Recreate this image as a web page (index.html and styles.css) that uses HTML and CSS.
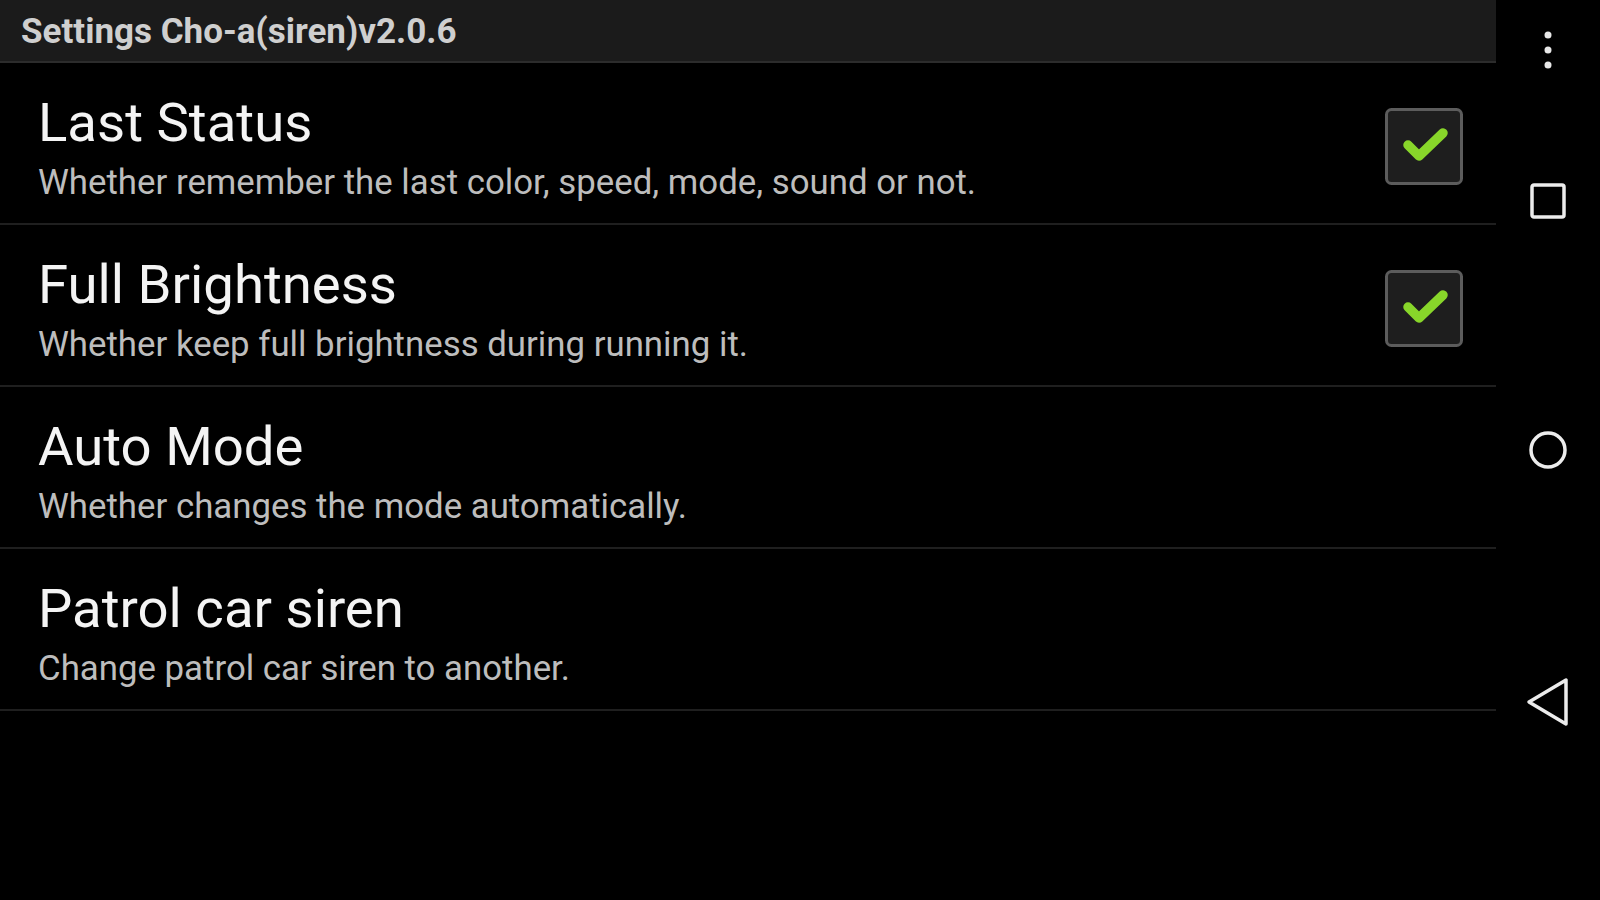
FILE: index.html
```html
<!DOCTYPE html>
<html>
<head>
<meta charset="utf-8">
<link rel="stylesheet" href="styles.css">
</head>
<body>
<div class="screen">
  <div class="main">
    <div class="header"><span class="title">Settings Cho-a(siren)v2.0.6</span></div>
    <div class="row">
      <div class="texts">
        <div class="row-title">Last Status</div>
        <div class="row-sub">Whether remember the last color, speed, mode, sound or not.</div>
      </div>
      <div class="check">
        <svg width="78" height="77" viewBox="0 0 78 77">
          <rect x="1.5" y="1.5" width="75" height="74" rx="5" fill="#1e1e1e" stroke="#5c5c5c" stroke-width="3"/>
          <polyline points="23,37 34,48 58,25" fill="none" stroke="#88d62a" stroke-width="9.5" stroke-linecap="round" stroke-linejoin="round"/>
        </svg>
      </div>
    </div>
    <div class="row">
      <div class="texts">
        <div class="row-title">Full Brightness</div>
        <div class="row-sub">Whether keep full brightness during running it.</div>
      </div>
      <div class="check">
        <svg width="78" height="77" viewBox="0 0 78 77">
          <rect x="1.5" y="1.5" width="75" height="74" rx="5" fill="#1e1e1e" stroke="#5c5c5c" stroke-width="3"/>
          <polyline points="23,37 34,48 58,25" fill="none" stroke="#88d62a" stroke-width="9.5" stroke-linecap="round" stroke-linejoin="round"/>
        </svg>
      </div>
    </div>
    <div class="row">
      <div class="texts">
        <div class="row-title">Auto Mode</div>
        <div class="row-sub">Whether changes the mode automatically.</div>
      </div>
    </div>
    <div class="row">
      <div class="texts">
        <div class="row-title">Patrol car siren</div>
        <div class="row-sub">Change patrol car siren to another.</div>
      </div>
    </div>
  </div>
  <div class="nav">
    <div class="menu">
      <svg width="10" height="40" viewBox="0 0 10 40">
        <circle cx="5" cy="5" r="3.5" fill="#e8e8e8"/>
        <circle cx="5" cy="20" r="3.5" fill="#e8e8e8"/>
        <circle cx="5" cy="35" r="3.5" fill="#e8e8e8"/>
      </svg>
    </div>
    <div class="nav-btn recent">
      <svg width="36" height="36" viewBox="0 0 36 36">
        <rect x="2" y="2" width="32" height="32" rx="2" fill="none" stroke="#ececec" stroke-width="3.5"/>
      </svg>
    </div>
    <div class="nav-btn home">
      <svg width="40" height="40" viewBox="0 0 40 40">
        <circle cx="20" cy="20" r="17" fill="none" stroke="#ececec" stroke-width="3.5"/>
      </svg>
    </div>
    <div class="nav-btn back">
      <svg width="44" height="50" viewBox="0 0 44 50">
        <polygon points="3,25 40,3 40,47" fill="none" stroke="#ececec" stroke-width="3.5" stroke-linejoin="round"/>
      </svg>
    </div>
  </div>
</div>
</body>
</html>
```

FILE: styles.css
```css
html, body {
  margin: 0;
  padding: 0;
  background: #000;
}
.screen {
  display: flex;
  width: 1600px;
  height: 900px;
  overflow: hidden;
  font-family: Roboto, "Noto Sans", sans-serif;
}
.main {
  width: 1496px;
  display: flex;
  flex-direction: column;
}
.header {
  height: 61px;
  background: #1b1b1b;
  border-bottom: 2px solid #2c2c2c;
  display: flex;
  align-items: center;
  padding-left: 21px;
}
.title {
  color: #cfcfcf;
  font-weight: bold;
  font-size: 35px;
  line-height: 44px;
  margin-top: 2px;
}
.row {
  height: 160px;
  border-bottom: 2px solid #1f1f1f;
  display: flex;
  align-items: center;
  padding-left: 38px;
  padding-right: 33px;
}
.texts {
  flex: 1;
  display: flex;
  flex-direction: column;
  padding-top: 7px;
}
.row-title {
  color: #f4f4f4;
  font-size: 54.5px;
  line-height: 62px;
}
.row-sub {
  color: #bdbdbd;
  font-size: 34.8px;
  line-height: 42px;
  margin-top: 8px;
}
.check {
  display: flex;
  margin-top: 6px;
}
.check svg {
  display: block;
}
.nav {
  width: 104px;
  display: flex;
  flex-direction: column;
  align-items: center;
}
.nav svg {
  display: block;
}
.menu {
  margin-top: 30px;
}
.recent {
  margin-top: 113px;
}
.home {
  margin-top: 211px;
}
.back {
  margin-top: 207px;
}
```
